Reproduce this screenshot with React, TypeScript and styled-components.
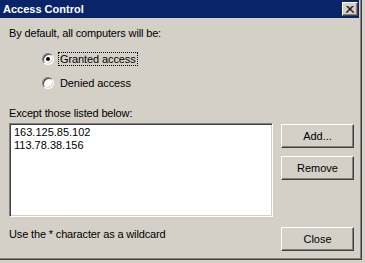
import React, { useState } from 'react';
import styled, { createGlobalStyle } from 'styled-components';

const GlobalStyle = createGlobalStyle`
  html, body {
    margin: 0;
    padding: 0;
    background: #d4d0c8;
  }
  body {
    font-family: "Liberation Sans", Arial, sans-serif;
    font-size: 11px;
    color: #000;
  }
`;

const Window = styled.div`
  width: 361px;
  height: 259px;
  background: #d4d0c8;
  border-right: 1px solid #404040;
  border-bottom: 1px solid #404040;
  box-shadow: inset -1px -1px #808080;
  display: flex;
  flex-direction: column;
`;

const TitleBar = styled.div`
  height: 18px;
  width: 359px;
  background: #0a246a;
  display: flex;
  align-items: center;
  justify-content: space-between;
  padding: 0 1px 0 3px;
  box-sizing: border-box;
`;

const Title = styled.span`
  color: #fff;
  font-weight: bold;
  font-size: 11px;
  line-height: 18px;
`;

const CaptionButton = styled.div`
  width: 16px;
  height: 14px;
  box-sizing: border-box;
  background: #d4d0c8;
  border-top: 1px solid #fff;
  border-left: 1px solid #fff;
  border-right: 1px solid #404040;
  border-bottom: 1px solid #404040;
  box-shadow: inset -1px -1px #808080;
  display: flex;
  align-items: center;
  justify-content: center;
`;

const Content = styled.div`
  padding: 9px 0 0 9px;
  display: flex;
  flex-direction: column;
`;

const Text = styled.div<{ $top?: number }>`
  line-height: 13px;
  letter-spacing: -0.15px;
  margin-top: ${(p) => p.$top ?? 0}px;
`;

const RadioGroup = styled.div`
  display: flex;
  flex-direction: column;
  gap: 8px;
  margin-top: 11px;
  padding-left: 33px;
`;

const RadioRow = styled.label`
  display: flex;
  align-items: center;
  height: 16px;
  cursor: default;
`;

const RadioCircle = styled.span<{ $checked: boolean }>`
  width: 12px;
  height: 12px;
  box-sizing: border-box;
  border-radius: 50%;
  background: #fff;
  border: 1px solid;
  border-color: #808080 #fff #fff #808080;
  box-shadow: inset 1px 1px #404040, inset -1px -1px #d4d0c8;
  display: flex;
  align-items: center;
  justify-content: center;
  flex-shrink: 0;

  &::after {
    content: '';
    width: 4px;
    height: 4px;
    border-radius: 50%;
    background: ${(p) => (p.$checked ? '#000' : 'transparent')};
  }
`;

const RadioLabel = styled.span<{ $focused: boolean }>`
  margin-left: 4px;
  padding: 0 1px;
  line-height: 12px;
  letter-spacing: -0.1px;
  border: 1px dotted ${(p) => (p.$focused ? '#000' : 'transparent')};
`;

const MainRow = styled.div`
  display: flex;
  gap: 8px;
  margin-top: 3px;
`;

const ListBox = styled.div`
  width: 264px;
  height: 94px;
  box-sizing: border-box;
  background: #fff;
  border: 1px solid;
  border-color: #808080 #fff #fff #808080;
  box-shadow: inset 1px 1px #404040, inset -1px -1px #d4d0c8;
  padding: 2px 4px;
`;

const ListItem = styled.div`
  line-height: 13px;
  white-space: nowrap;
`;

const ButtonColumn = styled.div`
  display: flex;
  flex-direction: column;
  gap: 8px;
  padding-top: 1px;
`;

const Button = styled.button`
  width: 73px;
  height: 24px;
  box-sizing: border-box;
  padding: 0;
  font-family: inherit;
  font-size: 11px;
  color: #000;
  background: #d4d0c8;
  border-top: 1px solid #fff;
  border-left: 1px solid #fff;
  border-right: 1px solid #404040;
  border-bottom: 1px solid #404040;
  box-shadow: inset -1px -1px #808080;
  outline: none;
`;

const Footer = styled.div`
  display: flex;
  justify-content: space-between;
  align-items: flex-start;
  margin-top: 10px;
  width: 345px;
`;

const FooterText = styled.div`
  line-height: 13px;
  letter-spacing: -0.15px;
  padding-top: 1px;
`;

export default function App() {
  const [access, setAccess] = useState<'granted' | 'denied'>('granted');
  const addresses = ['163.125.85.102', '113.78.38.156'];

  return (
    <>
      <GlobalStyle />
      <Window>
        <TitleBar>
          <Title>Access Control</Title>
          <CaptionButton>
            <svg width="8" height="7" viewBox="0 0 8 7">
              <path d="M0.5 0 L7.5 7 M1.5 0 L8 6.5 M7.5 0 L0.5 7 M6.5 0 L0 6.5" stroke="#000" strokeWidth="1" />
            </svg>
          </CaptionButton>
        </TitleBar>
        <Content>
          <Text>By default, all computers will be:</Text>
          <RadioGroup>
            <RadioRow onClick={() => setAccess('granted')}>
              <RadioCircle $checked={access === 'granted'} />
              <RadioLabel $focused={access === 'granted'}>Granted access</RadioLabel>
            </RadioRow>
            <RadioRow onClick={() => setAccess('denied')}>
              <RadioCircle $checked={access === 'denied'} />
              <RadioLabel $focused={access === 'denied'}>Denied access</RadioLabel>
            </RadioRow>
          </RadioGroup>
          <Text $top={16}>Except those listed below:</Text>
          <MainRow>
            <ListBox>
              {addresses.map((a) => (
                <ListItem key={a}>{a}</ListItem>
              ))}
            </ListBox>
            <ButtonColumn>
              <Button>Add...</Button>
              <Button>Remove</Button>
            </ButtonColumn>
          </MainRow>
          <Footer>
            <FooterText>Use the * character as a wildcard</FooterText>
            <Button>Close</Button>
          </Footer>
        </Content>
      </Window>
    </>
  );
}
